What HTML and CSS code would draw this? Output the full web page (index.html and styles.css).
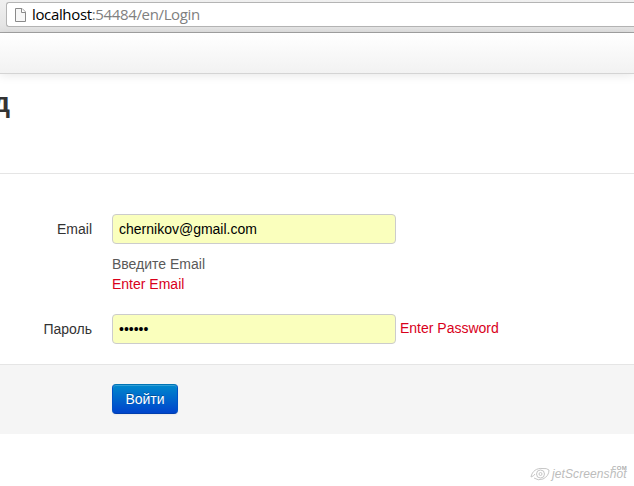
FILE: index.html
```html
<!DOCTYPE html>
<html lang="ru">
<head>
<meta charset="utf-8">
<title>Login</title>
<link rel="stylesheet" href="styles.css">
</head>
<body>
<div class="toolbar">
  <div class="address">
    <svg class="page-icon" width="13" height="16" viewBox="0 0 13 16"><path d="M1.5 1.5h6.5l3.5 3.5v9.5h-10z" fill="#f7f7f7" stroke="#8a8a8a"/><path d="M7.5 1.5v4h4" fill="#fff" stroke="#8a8a8a"/></svg>
    <span class="url"><b>localhost</b>:54484/en/Login</span>
  </div>
</div>
<div class="navbar"></div>
<header class="heading"><h2>Вход</h2></header>
<form class="form">
  <div class="row">
    <label for="email">Email</label>
    <div class="controls">
      <input id="email" type="text" value="chernikov@gmail.com">
      <p class="help">Введите Email</p>
      <p class="error">Enter Email</p>
    </div>
  </div>
  <div class="row">
    <label for="password">Пароль</label>
    <div class="controls inline">
      <input id="password" type="password" value="secret">
      <span class="error">Enter Password</span>
    </div>
  </div>
  <div class="actions"><button type="button">Войти</button></div>
</form>
<div class="watermark">
  <svg class="eye" width="20" height="16" viewBox="0 0 20 16" fill="none" stroke="#c6c6c6"><path d="M1 11C2 5 7 2 12 2.500Q17 2 19 4Q19 10 13 13Q8 15 4 12M1 11Q4 10 5 8"/><circle cx="10.500" cy="8" r="4"/><circle cx="10.500" cy="8" r="1.500"/></svg>
  <span class="brand">jetScreenshot</span>
  <span class="suffix">.COM</span>
</div>
</body>
</html>
```
FILE: styles.css
```css
* { box-sizing: border-box; }
body {
  margin: 0;
  height: 486px;
  overflow: hidden;
  position: relative;
  background: #fff;
  color: #333;
  font: 14px/20px "Liberation Sans", Arial, sans-serif;
}
.toolbar {
  height: 33px;
  padding: 2px 0 0 6px;
  background: linear-gradient(#f0f0f0, #e2e2e2);
  border-bottom: 1px solid #a3a3a3;
}
.address {
  display: flex;
  align-items: center;
  height: 25px;
  padding-left: 7px;
  background: #fff;
  border: 1px solid #b4b4b4;
  border-right: 0;
  border-radius: 3px 0 0 3px;
}
.page-icon { flex: none; margin-right: 5px; }
.url {
  padding-bottom: 1px;
  font: 15px/20px "Open Sans", sans-serif;
  letter-spacing: -0.35px;
  color: #808080;
  white-space: nowrap;
}
.url b { font-weight: 400; color: #000; }
.navbar {
  height: 41px;
  background: linear-gradient(#fff, #f2f2f2);
  border-bottom: 1px solid #d4d4d4;
  box-shadow: 0 1px 10px rgba(0, 0, 0, 0.1);
}
.heading {
  display: flex;
  height: 100px;
  padding-top: 9px;
  border-bottom: 1px solid #e5e5e5;
}
h2 {
  display: flex;
  justify-content: flex-end;
  width: 10px;
  margin: 0;
  font-size: 28px;
  line-height: 40px;
}
.form { margin: 0; padding-top: 40px; }
.row { display: flex; margin-bottom: 20px; }
label { width: 92px; margin-right: 20px; padding-top: 5px; text-align: right; }
input {
  display: block;
  width: 284px;
  height: 30px;
  padding: 4px 6px;
  border: 1px solid #ccc;
  border-radius: 4px;
  background: #faffbd;
  color: #000;
  font: 14px/20px "Liberation Sans", Arial, sans-serif;
}
p { margin: 0; }
.help { margin-top: 10px; color: #595959; }
.error { color: #d9001b; }
.inline { display: flex; }
.inline .error { margin: 4px 0 0 4px; }
.actions {
  height: 70px;
  padding: 19px 0 0 112px;
  background: #f5f5f5;
  border-top: 1px solid #e5e5e5;
}
button {
  display: block;
  width: 66px;
  height: 30px;
  padding: 0;
  border: 1px solid;
  border-color: #0074b4 #0052c4 #003eae;
  border-radius: 4px;
  background: linear-gradient(#0088cc, #0044cc);
  box-shadow: inset 0 1px 0 rgba(255, 255, 255, 0.2), 0 1px 2px rgba(0, 0, 0, 0.05);
  color: #fff;
  font: 14px/20px "Liberation Sans", Arial, sans-serif;
  text-shadow: 0 -1px 0 rgba(0, 0, 0, 0.25);
}
.watermark {
  position: absolute;
  left: 530px;
  top: 466px;
  display: flex;
  width: 100px;
  height: 16px;
}
.brand {
  margin-left: 2px;
  font: italic 12px/17px "Liberation Sans", sans-serif;
  letter-spacing: 0.1px;
  color: #bcbcbc;
}
.suffix {
  position: absolute;
  right: 3px;
  top: -1px;
  font: bold 6px/6px "Liberation Sans", sans-serif;
  letter-spacing: 0.3px;
  color: #b0b0b0;
}
```
